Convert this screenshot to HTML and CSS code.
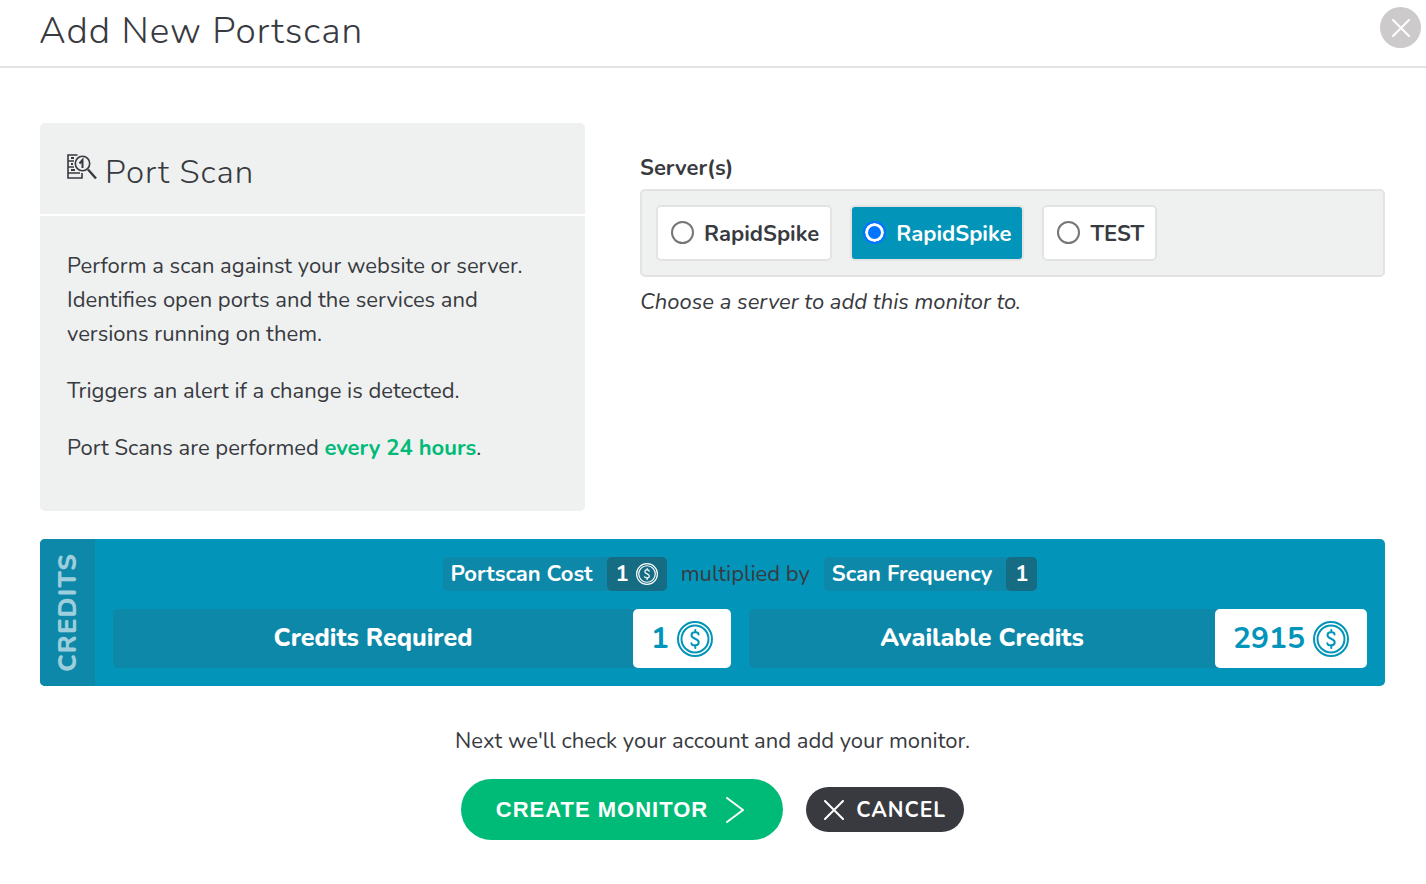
FILE: index.html
```html
<!DOCTYPE html>
<html lang="en">
<head>
    <meta charset="UTF-8">
    <meta name="viewport" content="width=device-width, initial-scale=1.0">
    <title>Add New Portscan</title>
    <link rel="stylesheet" href="styles.css">
</head>
<body>
    <svg class="defs" aria-hidden="true">
        <symbol id="coin" viewBox="0 0 36 36">
            <g fill="none" stroke="currentColor" stroke-width="2" stroke-linecap="round" stroke-linejoin="round">
                <circle cx="18" cy="18" r="17"/>
                <circle cx="18" cy="18" r="13.5"/>
                <path d="M21.500 13.500c0-1.600-1.300-2.200-2.700-2.200h-1.200c-1.900 0-3.100 1.200-3.100 2.900 0 4.100 7.200 3 7.200 7 0 1.900-1.300 3.100-3.200 3.100h-1.400c-1.500 0-2.700-.6-2.700-2M18.300 9v2.300M18.300 24.300v2.700"/>
            </g>
        </symbol>
    </svg>
    <header class="header">
        <h1>Add New Portscan</h1>
        <button class="close" type="button" aria-label="Close">
            <svg width="20" height="20" viewBox="0 0 20 20"><path d="M2 2l16 16M18 2L2 18"/></svg>
        </button>
    </header>
    <form class="content">
        <div class="columns">
            <section class="panel">
                <h2>
                    <svg width="30" height="26" viewBox="0 0 30 26" fill="none" stroke="#383a40" stroke-width="1.6">
                        <path d="M10.500 1H1v23h14v-5M1 7h6M1 13h6M1 19h12"/>
                        <path d="M4 4h3M4 10h2M4 16h4" stroke-width="2"/>
                        <circle cx="15.500" cy="9.500" r="7.200"/>
                        <path d="M12.500 9.500l3-3.500v8" stroke-width="2"/>
                        <path d="M21 15.500l8 9" stroke-width="2.400"/>
                    </svg>
                    Port Scan
                </h2>
                <div class="panel-body">
                    <p>Perform a scan against your website or server. Identifies open ports and the services and versions running on them.</p>
                    <p>Triggers an alert if a change is detected.</p>
                    <p>Port Scans are performed <strong>every 24 hours</strong>.</p>
                </div>
            </section>
            <fieldset class="servers">
                <legend>Server(s)</legend>
                <div class="options">
                    <label class="option"><input type="radio" name="server">RapidSpike</label>
                    <label class="option"><input type="radio" name="server" checked>RapidSpike</label>
                    <label class="option"><input type="radio" name="server">TEST</label>
                </div>
                <p class="hint">Choose a server to add this monitor to.</p>
            </fieldset>
        </div>

        <section class="credits">
            <div class="credits-title">CREDITS</div>
            <div class="credits-body">
                <div class="formula">
                    <span class="tag">Portscan Cost <span class="tag-value">1 <svg width="22" height="22"><use href="#coin"/></svg></span></span>
                    <span>multiplied by</span>
                    <span class="tag">Scan Frequency <span class="tag-value">1</span></span>
                </div>
                <div class="totals">
                    <div class="total">
                        <span class="total-label">Credits Required</span>
                        <span class="total-value">1 <svg width="36" height="36"><use href="#coin"/></svg></span>
                    </div>
                    <div class="total">
                        <span class="total-label">Available Credits</span>
                        <span class="total-value">2915 <svg width="36" height="36"><use href="#coin"/></svg></span>
                    </div>
                </div>
            </div>
        </section>

        <p class="next">Next we'll check your account and add your monitor.</p>
        <div class="buttons">
            <button class="button create" type="button">
                CREATE MONITOR
                <svg width="18" height="26" viewBox="0 0 18 26"><path d="M1 1l16 12L1 25"/></svg>
            </button>
            <button class="button cancel" type="button">
                <svg width="20" height="20" viewBox="0 0 20 20"><path d="M1 1l18 18M19 1L1 19"/></svg>
                CANCEL
            </button>
        </div>
    </form>
</body>
</html>
```
FILE: styles.css
```css
* {
    box-sizing: border-box;
}
body {
    margin: 0;
    font-family: Nunito, Lato, sans-serif;
    font-size: 22px;
    line-height: 34px;
    color: #383a40;
    background-color: #fff;
}
h1, h2, p {
    margin: 0;
}
svg {
    flex: none;
}
.defs {
    display: none;
}
.header {
    display: flex;
    justify-content: space-between;
    align-items: flex-start;
    padding: 7px 5px 11px 39px;
    border-bottom: 2px solid #e3e3e3;
}
h1 {
    font-size: 37px;
    line-height: 48px;
    font-weight: 300;
    letter-spacing: 1px;
}
.close {
    display: flex;
    align-items: center;
    justify-content: center;
    width: 41px;
    height: 41px;
    padding: 0;
    border: none;
    border-radius: 50%;
    background-color: #cccacb;
    cursor: pointer;
}
.close path, .button path {
    fill: none;
    stroke: #fff;
    stroke-width: 2;
    stroke-linecap: round;
    stroke-linejoin: round;
}
.content {
    padding: 55px 41px 40px 40px;
}
.columns {
    display: grid;
    grid-template-columns: 545fr 745fr;
    gap: 55px;
}
.panel {
    background-color: #eff1f1;
    border-radius: 5px;
}
h2 {
    display: flex;
    gap: 8px;
    padding: 28px 27px 19px;
    border-bottom: 2px solid #fff;
    font-size: 33px;
    line-height: 44px;
    font-weight: 300;
    letter-spacing: 1px;
}
h2 svg {
    margin-top: 3px;
}
.panel-body {
    padding: 33px 27px 46px;
}
.panel-body p + p {
    margin-top: 23px;
}
strong {
    color: #00bb77;
}
.servers {
    margin: 0;
    padding: 28px 0 0;
    border: none;
    min-width: 0;
}
legend {
    float: left;
    width: 100%;
    padding: 0;
    margin-bottom: 4px;
    font-weight: bold;
}
.options {
    clear: both;
    display: flex;
    flex-wrap: wrap;
    gap: 18px;
    padding: 14px;
    background-color: #eff1f1;
    border: 2px solid #e3e3e3;
    border-radius: 5px;
}
.option {
    display: flex;
    align-items: center;
    gap: 10px;
    padding: 10px 11px 8px 13px;
    background-color: #fff;
    border: 2px solid #e3e3e3;
    border-radius: 5px;
    font-weight: bold;
    cursor: pointer;
}
.option input {
    appearance: none;
    width: 23px;
    height: 23px;
    margin: 0 0 4px;
    border: 2px solid #767676;
    border-radius: 50%;
    background-color: #fff;
}
.option:has(input:checked) {
    padding-left: 11px;
    background-color: #0295b9;
    color: #fff;
}
.option input:checked {
    border-color: #0075ff;
    background-color: #0075ff;
    box-shadow: inset 0 0 0 3px #fff;
}
.hint {
    padding-top: 8px;
    font-style: italic;
}
.credits {
    display: flex;
    margin-top: 28px;
    background-color: #0295b9;
    border-radius: 5px;
    overflow: hidden;
}
.credits-title {
    width: 55px;
    writing-mode: vertical-rl;
    transform: rotate(180deg);
    text-align: center;
    line-height: 55px;
    font-size: 26px;
    font-weight: 800;
    letter-spacing: 1px;
    color: rgba(255, 255, 255, 0.6);
    background-color: #0e88a8;
}
.credits-body {
    flex: 1;
    padding: 18px;
}
.formula {
    display: flex;
    justify-content: center;
    gap: 14px;
}
.tag {
    display: flex;
    gap: 14px;
    padding-left: 8px;
    border-radius: 5px;
    background-color: #0e88a8;
    font-weight: bold;
    color: #fff;
}
.tag-value {
    display: flex;
    align-items: center;
    gap: 7px;
    padding: 0 9px;
    border-radius: 5px;
    background-color: #166c83;
}
.totals {
    display: grid;
    grid-template-columns: 1fr 1fr;
    gap: 18px;
    margin-top: 18px;
}
.total {
    display: flex;
    border-radius: 5px;
    background-color: #0e88a8;
    color: #fff;
    font-size: 25px;
    font-weight: 800;
    line-height: 59px;
}
.total-label {
    flex: 1;
    text-align: center;
}
.total-value {
    display: flex;
    align-items: center;
    gap: 8px;
    padding: 0 18px;
    border-radius: 5px;
    background-color: #fff;
    color: #0295b9;
    font-size: 30px;
    font-weight: bold;
}
.next {
    margin-top: 38px;
    text-align: center;
}
.buttons {
    display: flex;
    justify-content: center;
    align-items: center;
    gap: 23px;
    margin-top: 21px;
}
.button {
    display: flex;
    align-items: center;
    border: none;
    border-radius: 31px;
    color: #fff;
    font-weight: bold;
    letter-spacing: 1px;
    cursor: pointer;
}
.create {
    gap: 18px;
    height: 61px;
    padding: 0 39px 0 35px;
    font-family: "Liberation Sans", Arial, sans-serif;
    font-size: 22px;
    background-color: #00bb77;
}
.cancel {
    gap: 12px;
    height: 45px;
    padding: 0 18px;
    font-family: inherit;
    font-size: 21px;
    background-color: #383a40;
}
```
